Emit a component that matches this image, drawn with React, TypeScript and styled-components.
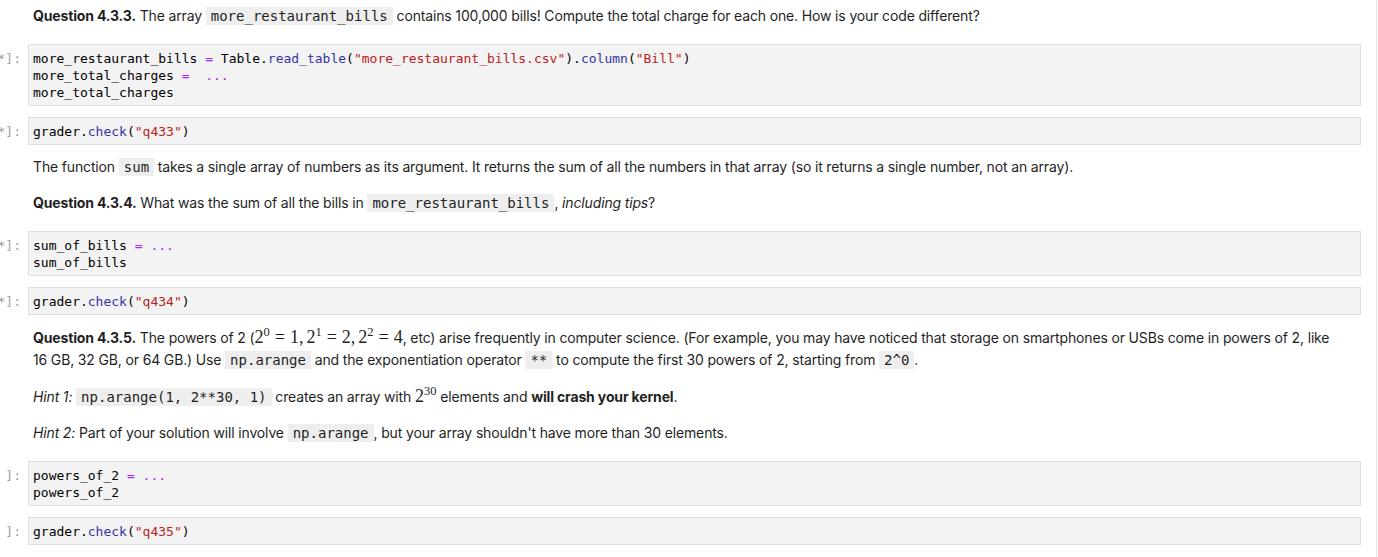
import React from "react";
import styled, { createGlobalStyle } from "styled-components";

const GlobalStyle = createGlobalStyle`
  html, body {
    margin: 0;
    padding: 0;
    background: #fff;
  }
  body {
    font-family: Inter, "Liberation Sans", sans-serif;
    color: #1f1f1f;
    overflow: hidden;
  }
`;

const Page = styled.div`
  width: 1378px;
  height: 557px;
  overflow: hidden;
  background: #fff;
`;

const Notebook = styled.div`
  box-sizing: border-box;
  width: 1377px;
  height: 557px;
  padding-right: 15px;
  border-right: 1px solid #e3e3e3;
  display: flex;
  flex-direction: column;
`;

const Row = styled.div<{ $mt: number }>`
  display: flex;
  align-items: flex-start;
  margin-top: ${(p) => p.$mt}px;
`;

const Prompt = styled.div`
  flex: 0 0 21px;
  width: 21px;
  margin-right: 7px;
  padding-top: 6px;
  display: flex;
  justify-content: flex-end;
  overflow: hidden;
  white-space: pre;
  font-family: "DejaVu Sans Mono", "Liberation Mono", monospace;
  font-size: 13px;
  line-height: 17px;
  color: #a0a0a0;
`;

const InputArea = styled.pre`
  flex: 1;
  margin: 0;
  padding: 5px 4px 4px;
  background: #f3f3f3;
  border: 1px solid #dfdfdf;
  font-family: "DejaVu Sans Mono", "Liberation Mono", monospace;
  font-size: 13px;
  line-height: 17px;
  color: #000;
  white-space: pre;
  overflow: hidden;
`;

const Markdown = styled.div`
  flex: 1;
  padding-left: 5px;
  font-size: 14px;
  line-height: 22px;
  letter-spacing: -0.15px;
  color: #1f1f1f;
`;

const Para = styled.p`
  margin: 0;
`;

const Code = styled.code`
  font-family: "DejaVu Sans Mono", "Liberation Mono", monospace;
  font-size: 14px;
  letter-spacing: 0;
  background: #eeeeee;
  padding: 1px 5px;
  color: #1f1f1f;
`;

const Math = styled.span`
  font-family: "Liberation Serif", "DejaVu Serif", serif;
  font-size: 18px;
  line-height: 0;
  letter-spacing: 0;
  sup {
    font-size: 12.5px;
    line-height: 0;
    vertical-align: 7px;
  }
`;

const Eq = styled.span`
  margin: 0 5px;
`;

const Comma = styled.span`
  margin-right: 3px;
`;

const Op = styled.span`
  color: #aa22ff;
`;
const Prop = styled.span`
  color: #3434a6;
`;
const Str = styled.span`
  color: #ba2121;
`;

type Block =
  | { kind: "md"; mt: number; body: React.ReactNode }
  | { kind: "code"; mt: number; prompt: string; body: React.ReactNode };

const blocks: Block[] = [
  {
    kind: "md",
    mt: 5,
    body: (
      <Para>
        <b>Question 4.3.3.</b> The array <Code>more_restaurant_bills</Code> contains 100,000 bills! Compute the total
        charge for each one. How is your code different?
      </Para>
    ),
  },
  {
    kind: "code",
    mt: 17,
    prompt: "[*]:",
    body: (
      <>
        more_restaurant_bills <Op>=</Op> Table.<Prop>read_table</Prop>(<Str>"more_restaurant_bills.csv"</Str>).
        <Prop>column</Prop>(<Str>"Bill"</Str>){"\n"}
        more_total_charges <Op>=</Op>  <Op>...</Op>
        {"\n"}more_total_charges
      </>
    ),
  },
  {
    kind: "code",
    mt: 11,
    prompt: "[*]:",
    body: (
      <>
        grader.<Prop>check</Prop>(<Str>"q433"</Str>)
      </>
    ),
  },
  {
    kind: "md",
    mt: 11,
    body: (
      <Para>
        The function <Code>sum</Code> takes a single array of numbers as its argument. It returns the sum of all the
        numbers in that array (so it returns a single number, not an array).
      </Para>
    ),
  },
  {
    kind: "md",
    mt: 14,
    body: (
      <Para>
        <b>Question 4.3.4.</b> What was the sum of all the bills in <Code>more_restaurant_bills</Code>,{" "}
        <i>including tips</i>?
      </Para>
    ),
  },
  {
    kind: "code",
    mt: 17,
    prompt: "[*]:",
    body: (
      <>
        sum_of_bills <Op>=</Op> <Op>...</Op>
        {"\n"}sum_of_bills
      </>
    ),
  },
  {
    kind: "code",
    mt: 11,
    prompt: "[*]:",
    body: (
      <>
        grader.<Prop>check</Prop>(<Str>"q434"</Str>)
      </>
    ),
  },
  {
    kind: "md",
    mt: 12,
    body: (
      <Para>
        <b>Question 4.3.5.</b> The powers of 2 (
        <Math>
          2<sup>0</sup>
          <Eq>=</Eq>1<Comma>,</Comma>2<sup>1</sup>
          <Eq>=</Eq>2<Comma>,</Comma>2<sup>2</sup>
          <Eq>=</Eq>4
        </Math>
        , etc) arise frequently in computer science. (For example, you may have noticed that storage on smartphones or
        USBs come in powers of 2, like
        <br />
        16 GB, 32 GB, or 64 GB.) Use <Code>np.arange</Code> and the exponentiation operator <Code>**</Code> to compute
        the first 30 powers of 2, starting from <Code>2^0</Code>.
      </Para>
    ),
  },
  {
    kind: "md",
    mt: 15,
    body: (
      <Para>
        <i>Hint 1:</i> <Code>np.arange(1, 2**30, 1)</Code> creates an array with{" "}
        <Math>
          2<sup>30</sup>
        </Math>{" "}
        elements and <b>will crash your kernel</b>.
      </Para>
    ),
  },
  {
    kind: "md",
    mt: 14,
    body: (
      <Para>
        <i>Hint 2:</i> Part of your solution will involve <Code>np.arange</Code>, but your array shouldn't have more
        than 30 elements.
      </Para>
    ),
  },
  {
    kind: "code",
    mt: 17,
    prompt: "[ ]:",
    body: (
      <>
        powers_of_2 <Op>=</Op> <Op>...</Op>
        {"\n"}powers_of_2
      </>
    ),
  },
  {
    kind: "code",
    mt: 11,
    prompt: "[ ]:",
    body: (
      <>
        grader.<Prop>check</Prop>(<Str>"q435"</Str>)
      </>
    ),
  },
];

export default function App() {
  return (
    <Page>
      <GlobalStyle />
      <Notebook>
        {blocks.map((b, i) =>
          b.kind === "code" ? (
            <Row key={i} $mt={b.mt}>
              <Prompt>{b.prompt}</Prompt>
              <InputArea>{b.body}</InputArea>
            </Row>
          ) : (
            <Row key={i} $mt={b.mt}>
              <Prompt />
              <Markdown>{b.body}</Markdown>
            </Row>
          )
        )}
      </Notebook>
    </Page>
  );
}
